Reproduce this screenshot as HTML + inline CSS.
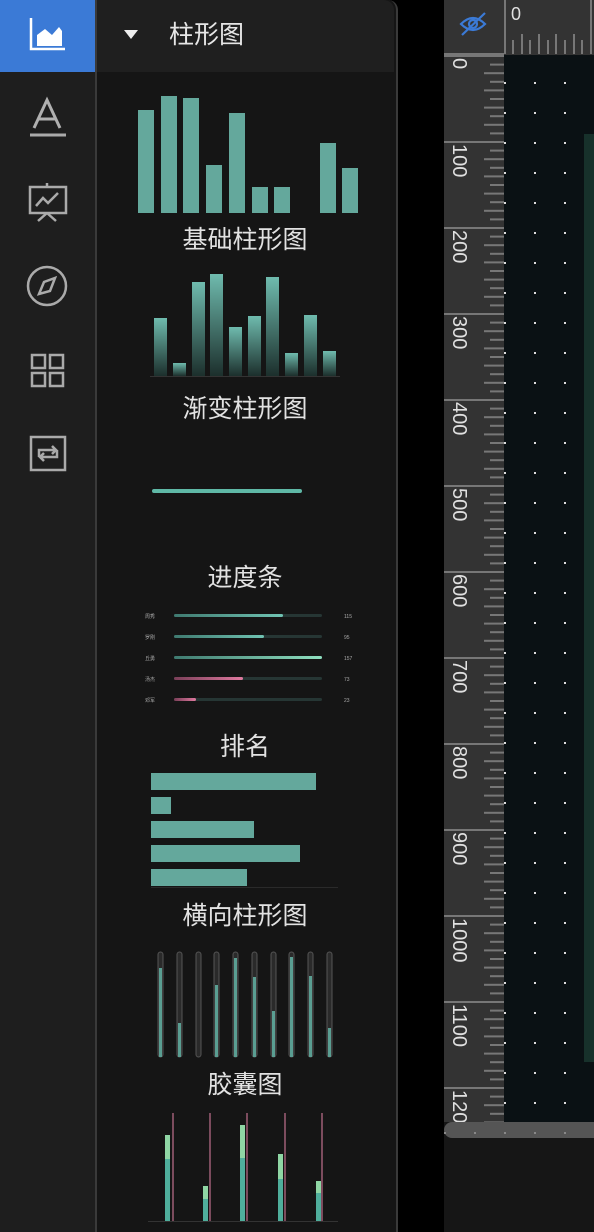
<!DOCTYPE html>
<html><head><meta charset="utf-8">
<style>
html,body{margin:0;padding:0;background:#000;}
body{width:594px;height:1232px;position:relative;overflow:hidden;font-family:"Liberation Sans","Noto Sans CJK SC",sans-serif;}
.abs{position:absolute;}
.lbl{position:absolute;left:97px;width:296px;text-align:center;color:#e2e2e2;font-size:25px;line-height:30px;}
</style></head><body>
<!-- left sidebar -->
<div class="abs" style="left:0;top:0;width:95px;height:1232px;background:#1e1e1e"></div>
<div class="abs" style="left:0;top:0;width:95px;height:72px;background:#3b7ad6"></div>
<svg class="abs" style="left:0;top:0" width="95" height="480">
 <g fill="none" stroke="#fff" stroke-width="2.5">
  <path d="M31 18 V49 H65"/>
 </g>
 <path d="M37 46 V35 L45 29 L52 35 L59 27 L62 31 V46 Z" fill="#fff"/>
 <g stroke="#aaa" fill="none" stroke-width="2.5">
  <path d="M34 128 L47 100 L60 128 M38.5 119 H55.5" stroke="#b0b0b0" stroke-width="3"/>
  <path d="M30 135 H66" stroke-width="3"/>
  <rect x="30" y="187" width="36" height="26"/>
  <path d="M47 183 V187 M36 206 L43 198 L48 203 L58 193 M47 213 L38 221 M47 213 L56 221"/>
  <circle cx="47" cy="286" r="19"/>
  <path d="M55 278 L50 291 L39 294 L44 282 Z"/>
  <rect x="32" y="355" width="13" height="13"/><rect x="50" y="355" width="13" height="13"/>
  <rect x="32" y="373" width="13" height="13"/><rect x="50" y="373" width="13" height="13"/>
  <rect x="31" y="437" width="34" height="33"/>
  <path d="M39 457 V450 H56 M52 446 L56 450 L52 454 M57 450 V457 H40 M44 461 L40 457 L44 453"/>
 </g>
</svg>
<!-- panel -->
<div class="abs" style="left:95px;top:0;width:299px;height:1232px;background:#151515;border-left:2px solid #3a3a3a;border-right:2px solid #3a3a3a;border-top-right-radius:10px;"></div>
<div class="abs" style="left:97px;top:0;width:297px;height:72px;background:#1f1f1f;border-top-right-radius:10px;"></div>
<svg class="abs" style="left:122px;top:29px" width="18" height="12"><path d="M2 1 H16 L9 10 Z" fill="#eee"/></svg>
<div class="abs" style="left:169px;top:19px;color:#e6e6e6;font-size:25px;line-height:32px;">柱形图</div>

<svg class="abs" style="left:97px;top:72px" width="297" height="1160" viewBox="97 72 297 1160">
 <defs>
  <linearGradient id="g1" x1="0" y1="0" x2="0" y2="1"><stop offset="0" stop-color="#6fbbae"/><stop offset="1" stop-color="#1c2f2c"/></linearGradient>
  <linearGradient id="gp1" x1="0" x2="1"><stop offset="0" stop-color="#3f7a70"/><stop offset="1" stop-color="#70c4b3"/></linearGradient>
  <linearGradient id="gp2" x1="0" x2="1"><stop offset="0" stop-color="#3f7a70"/><stop offset="1" stop-color="#8fe0c0"/></linearGradient>
  <linearGradient id="gp3" x1="0" x2="1"><stop offset="0" stop-color="#7a3f58"/><stop offset="1" stop-color="#e07aa0"/></linearGradient>
 </defs>
 <g fill="#64a89c">
  <rect x="138" y="110" width="16" height="103"/><rect x="161" y="96" width="16" height="117"/>
  <rect x="183" y="98" width="16" height="115"/><rect x="206" y="165" width="16" height="48"/>
  <rect x="229" y="113" width="16" height="100"/><rect x="252" y="187" width="16" height="26"/>
  <rect x="274" y="187" width="16" height="26"/><rect x="320" y="143" width="16" height="70"/>
  <rect x="342" y="168" width="16" height="45"/>
 </g>
 <g fill="url(#g1)">
  <rect x="154" y="318" width="13" height="58"/><rect x="173" y="363" width="13" height="13"/>
  <rect x="192" y="282" width="13" height="94"/><rect x="210" y="274" width="13" height="102"/>
  <rect x="229" y="327" width="13" height="49"/><rect x="248" y="316" width="13" height="60"/>
  <rect x="266" y="277" width="13" height="99"/><rect x="285" y="353" width="13" height="23"/>
  <rect x="304" y="315" width="13" height="61"/><rect x="323" y="351" width="13" height="25"/>
 </g>
 <path d="M150 376.5 H340" stroke="#333" stroke-width="1"/>
 <rect x="152" y="489" width="150" height="4" rx="2" fill="#5fb8a6"/>
 <g font-size="5" fill="#aaa"><text x="145" y="618">周秀</text><text x="145" y="639">罗刚</text><text x="145" y="660">丘勇</text><text x="145" y="681">汤杰</text><text x="145" y="702">邓军</text>
 <text x="344" y="618">115</text><text x="344" y="639">95</text><text x="344" y="660">157</text><text x="344" y="681">73</text><text x="344" y="702">23</text></g>
 <g fill="#263634"><rect x="174" y="614" width="148" height="3" rx="1.5"/><rect x="174" y="635" width="148" height="3" rx="1.5"/><rect x="174" y="656" width="148" height="3" rx="1.5"/><rect x="174" y="677" width="148" height="3" rx="1.5"/><rect x="174" y="698" width="148" height="3" rx="1.5"/></g>
 <rect x="174" y="614" width="109" height="3" rx="1.5" fill="url(#gp1)"/>
 <rect x="174" y="635" width="90" height="3" rx="1.5" fill="url(#gp1)"/>
 <rect x="174" y="656" width="148" height="3" rx="1.5" fill="url(#gp2)"/>
 <rect x="174" y="677" width="69" height="3" rx="1.5" fill="url(#gp3)"/>
 <rect x="174" y="698" width="22" height="3" rx="1.5" fill="url(#gp3)"/>
 <g fill="#64a89c">
  <rect x="151" y="773" width="165" height="17"/><rect x="151" y="797" width="20" height="17"/>
  <rect x="151" y="821" width="103" height="17"/><rect x="151" y="845" width="149" height="17"/>
  <rect x="151" y="869" width="96" height="17"/>
 </g>
 <path d="M151 887.5 H338" stroke="#2a2a2a"/>
 <g fill="#2a2a2a" stroke="#555" stroke-width="1">
  <rect x="158" y="952" width="5" height="105" rx="2.5"/><rect x="177" y="952" width="5" height="105" rx="2.5"/>
  <rect x="196" y="952" width="5" height="105" rx="2.5"/><rect x="214" y="952" width="5" height="105" rx="2.5"/>
  <rect x="233" y="952" width="5" height="105" rx="2.5"/><rect x="252" y="952" width="5" height="105" rx="2.5"/>
  <rect x="271" y="952" width="5" height="105" rx="2.5"/><rect x="289" y="952" width="5" height="105" rx="2.5"/>
  <rect x="308" y="952" width="5" height="105" rx="2.5"/><rect x="327" y="952" width="5" height="105" rx="2.5"/>
 </g>
 <g fill="#5a9e92">
  <rect x="159" y="968" width="3" height="89"/><rect x="178" y="1023" width="3" height="34"/>
  <rect x="215" y="985" width="3" height="72"/><rect x="234" y="958" width="3" height="99"/>
  <rect x="253" y="977" width="3" height="80"/><rect x="272" y="1011" width="3" height="46"/>
  <rect x="290" y="957" width="3" height="100"/><rect x="309" y="976" width="3" height="81"/>
  <rect x="328" y="1028" width="3" height="29"/>
 </g>
 <g stroke="#c0708e" stroke-width="1.2"><path d="M173 1113 V1221 M210 1113 V1221 M247 1113 V1221 M285 1113 V1221 M322 1113 V1221"/></g>
 <g fill="#4fae9c">
  <rect x="165" y="1135" width="5" height="86"/><rect x="203" y="1186" width="5" height="35"/>
  <rect x="240" y="1125" width="5" height="96"/><rect x="278" y="1154" width="5" height="67"/>
  <rect x="316" y="1181" width="5" height="40"/>
 </g>
 <g fill="#8fd6a4"><rect x="165" y="1135" width="5" height="24"/><rect x="203" y="1186" width="5" height="13"/><rect x="240" y="1125" width="5" height="33"/><rect x="278" y="1154" width="5" height="25"/><rect x="316" y="1181" width="5" height="12"/></g>
 <path d="M148 1221.5 H338" stroke="#333"/>
</svg>
<div class="lbl" style="top:225px">基础柱形图</div>
<div class="lbl" style="top:394px">渐变柱形图</div>
<div class="lbl" style="top:563px">进度条</div>
<div class="lbl" style="top:732px">排名</div>
<div class="lbl" style="top:901px">横向柱形图</div>
<div class="lbl" style="top:1070px">胶囊图</div>

<div class="abs" style="left:444px;top:1122px;width:150px;height:110px;background:#161616"></div>
<svg class="abs" style="left:444px;top:0" width="150" height="1140" viewBox="444 0 150 1140">
 <defs>
  <pattern id="dots" x="504" y="82" width="30" height="30" patternUnits="userSpaceOnUse"><rect x="0" y="0" width="2" height="2" fill="#ddd"/></pattern>
  <pattern id="vt" x="444" y="55" width="60" height="86" patternUnits="userSpaceOnUse">
   <rect x="0" y="0" width="60" height="2" fill="#777"/>
   <g fill="#777"><rect x="46" y="8.6" width="14" height="2"/><rect x="40" y="17.2" width="20" height="2"/><rect x="46" y="25.8" width="14" height="2"/><rect x="40" y="34.4" width="20" height="2"/><rect x="46" y="43" width="14" height="2"/><rect x="40" y="51.6" width="20" height="2"/><rect x="46" y="60.2" width="14" height="2"/><rect x="40" y="68.8" width="20" height="2"/><rect x="46" y="77.4" width="14" height="2"/></g>
  </pattern>
 </defs>
 <rect x="444" y="0" width="150" height="1122" fill="#333"/>
 <rect x="504" y="55" width="90" height="1067" fill="#0a1114"/>
 <rect x="584" y="134" width="10" height="928" fill="#17312b"/>
 <rect x="504" y="55" width="90" height="1067" fill="url(#dots)"/>
 <rect x="444" y="55" width="60" height="1067" fill="url(#vt)"/>
 <rect x="444" y="53" width="60" height="2" fill="#777"/>
 <rect x="504" y="0" width="2" height="54" fill="#777"/>
 <g fill="#777"><rect x="512" y="40" width="2" height="14"/><rect x="521" y="34" width="2" height="20"/><rect x="529" y="40" width="2" height="14"/><rect x="538" y="34" width="2" height="20"/><rect x="547" y="40" width="2" height="14"/><rect x="555" y="34" width="2" height="20"/><rect x="564" y="40" width="2" height="14"/><rect x="573" y="34" width="2" height="20"/><rect x="581" y="40" width="2" height="14"/><rect x="590" y="0" width="2" height="54"/></g>
 <text x="511" y="20" font-size="18" fill="#e0e0e0" font-family="Liberation Sans">0</text>
 <g font-size="20" fill="#e0e0e0" font-family="Liberation Sans">
  <text transform="translate(453 58) rotate(90)">0</text>
  <text transform="translate(453 144) rotate(90)">100</text>
  <text transform="translate(453 230) rotate(90)">200</text>
  <text transform="translate(453 316) rotate(90)">300</text>
  <text transform="translate(453 402) rotate(90)">400</text>
  <text transform="translate(453 488) rotate(90)">500</text>
  <text transform="translate(453 574) rotate(90)">600</text>
  <text transform="translate(453 660) rotate(90)">700</text>
  <text transform="translate(453 746) rotate(90)">800</text>
  <text transform="translate(453 832) rotate(90)">900</text>
  <text transform="translate(453 918) rotate(90)">1000</text>
  <text transform="translate(453 1004) rotate(90)">1100</text>
  <text transform="translate(453 1090) rotate(90)">1200</text>
 </g>
 <g stroke="#3b7ad6" stroke-width="2.2" fill="none">
  <path d="M461 24 Q473 12 485 24 Q473 36 461 24 Z"/>
  <circle cx="473" cy="24" r="4"/>
  <path d="M462 35 L485 13"/>
 </g>
 <rect x="444" y="1122" width="160" height="16" rx="8" fill="#555"/>
 <g fill="#888"><rect x="444" y="1132" width="2" height="2"/><rect x="474" y="1132" width="2" height="2"/><rect x="504" y="1132" width="2" height="2"/><rect x="534" y="1132" width="2" height="2"/><rect x="564" y="1132" width="2" height="2"/></g>
</svg>
</body></html>
